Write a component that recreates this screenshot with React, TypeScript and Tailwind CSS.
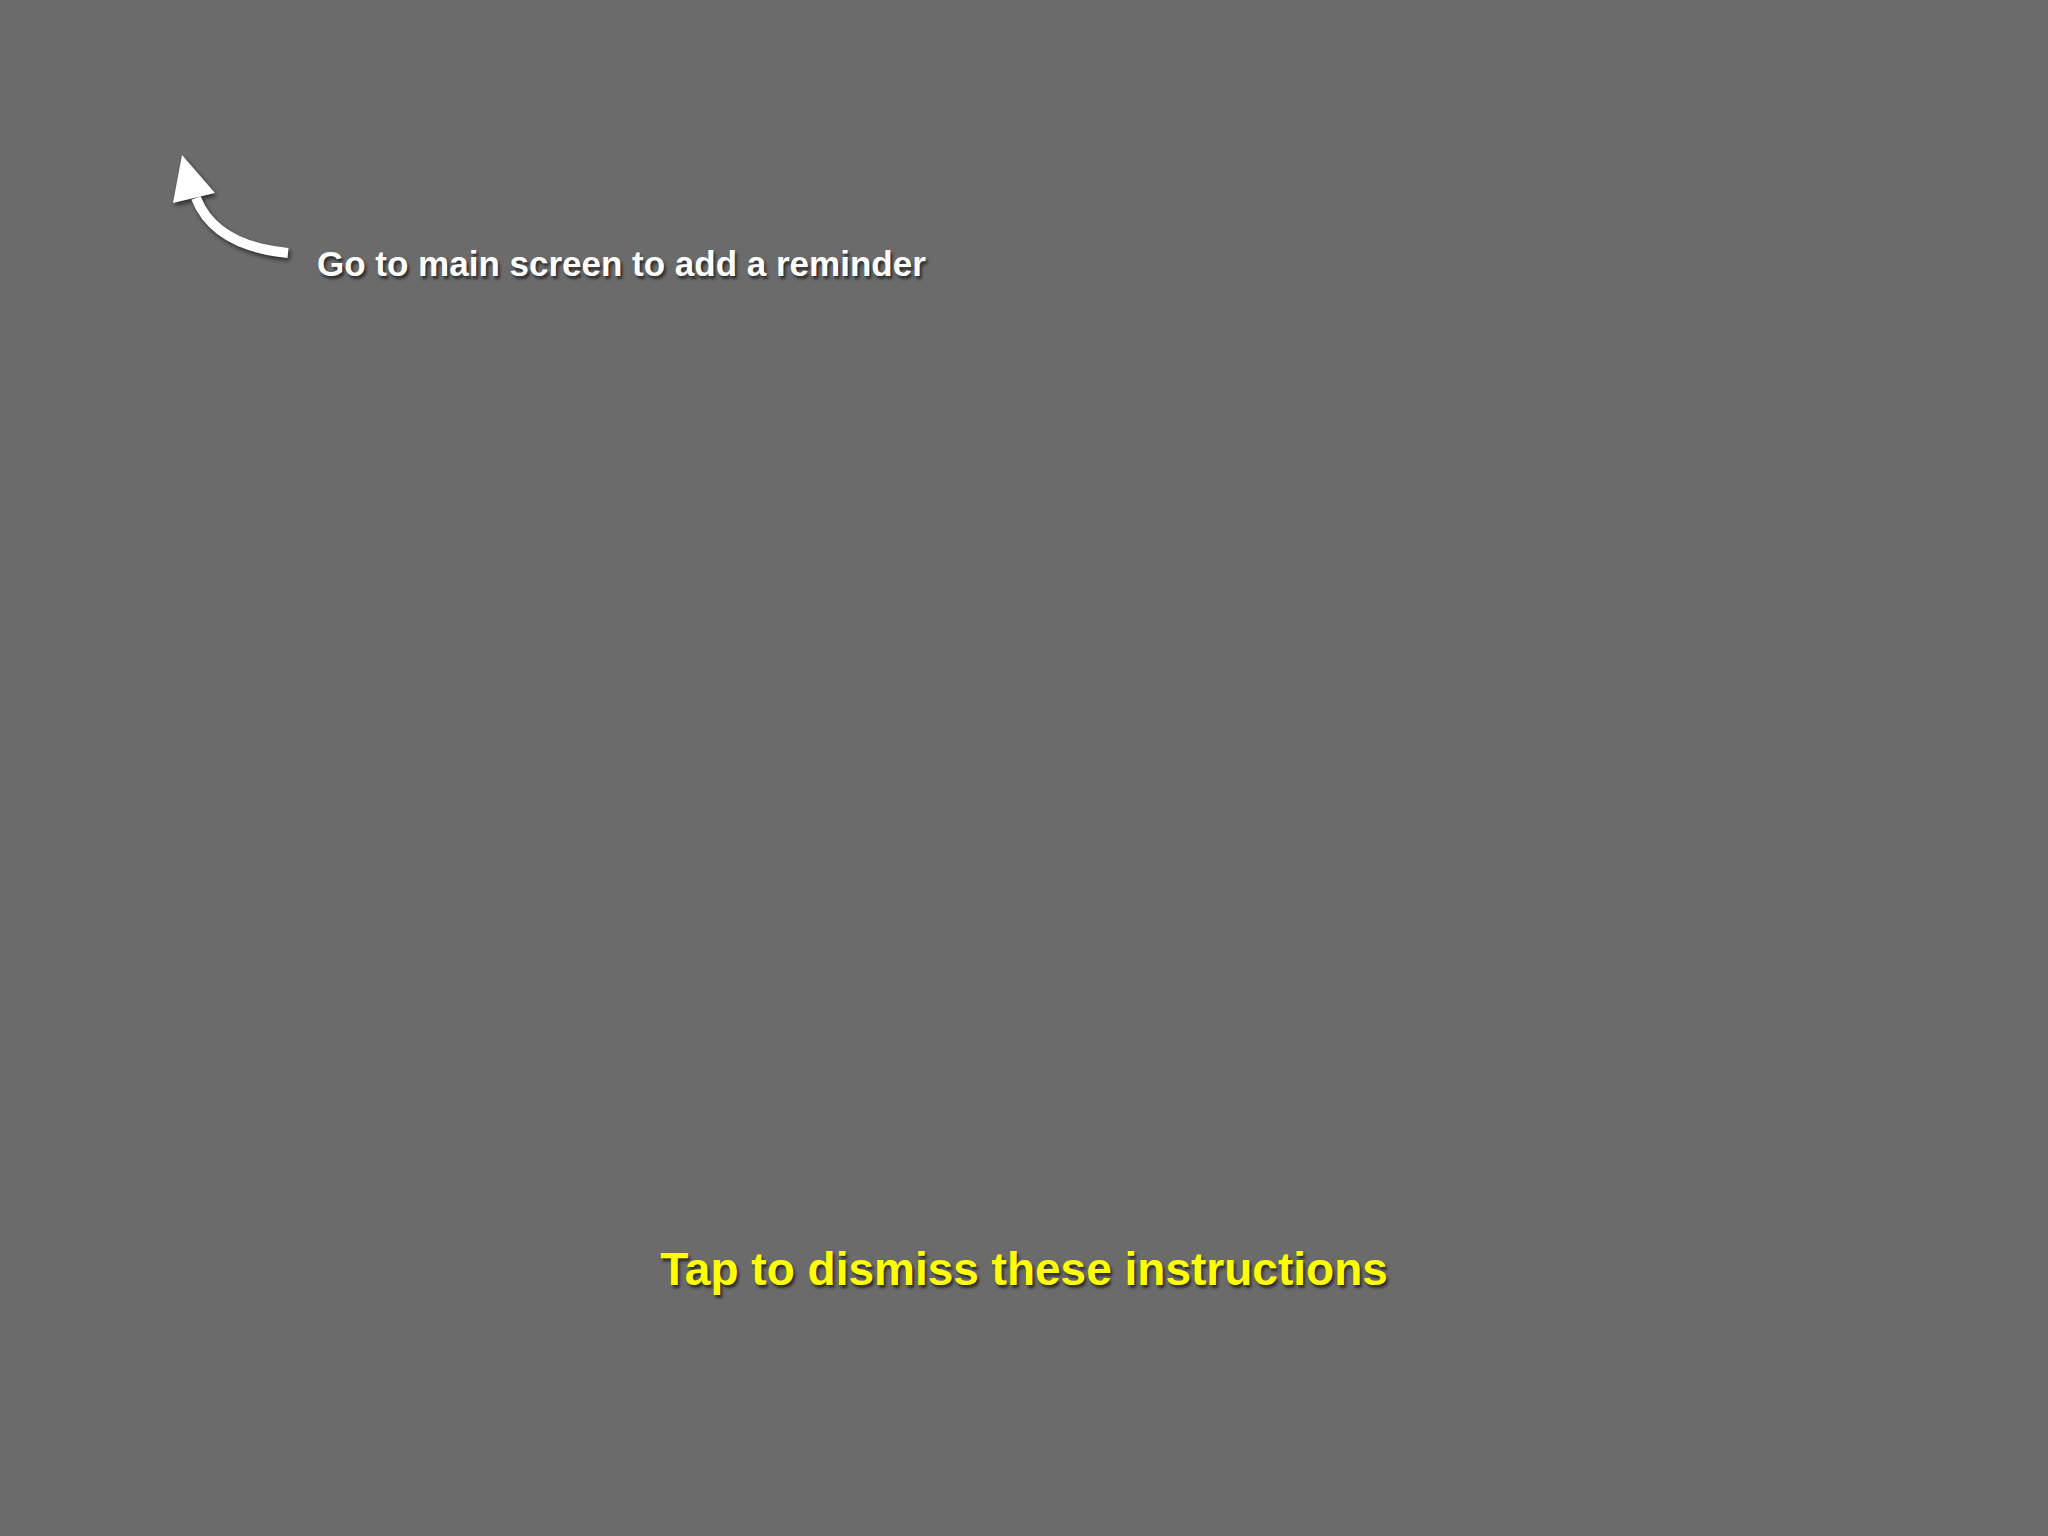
import React from 'react'

const font = { fontFamily: '"Liberation Sans", Arial, Helvetica, sans-serif' }

function CurvedArrow() {
  return (
    <svg width="140" height="130" viewBox="0 0 140 130" className="shrink-0 drop-shadow-[2px_3px_2px_rgba(0,0,0,0.55)]">
      <path d="M36 58 Q 55 106 128 113" fill="none" stroke="#ffffff" strokeWidth="10" strokeLinecap="butt" />
      <polygon points="22,15 13,63 55,53" fill="#ffffff" />
    </svg>
  )
}

export default function App() {
  return (
    <div className="flex h-[1536px] w-full flex-col overflow-hidden bg-[#6b6b6b]" style={font}>
      {/* hint row */}
      <div className="flex h-[130px] items-start pl-[160px] mt-[140px]">
        <CurvedArrow />
        <p className="ml-[17px] mt-[106px] whitespace-nowrap text-[35px] font-bold leading-none text-white [text-shadow:2px_3px_3px_rgba(0,0,0,0.6)]">
          Go to main screen to add a reminder
        </p>
      </div>

      {/* dismiss */}
      <p className="mt-[976px] text-center text-[46px] font-bold leading-none text-[#ffff00] [text-shadow:2px_3px_3px_rgba(0,0,0,0.6)]">
        Tap to dismiss these instructions
      </p>
    </div>
  )
}
